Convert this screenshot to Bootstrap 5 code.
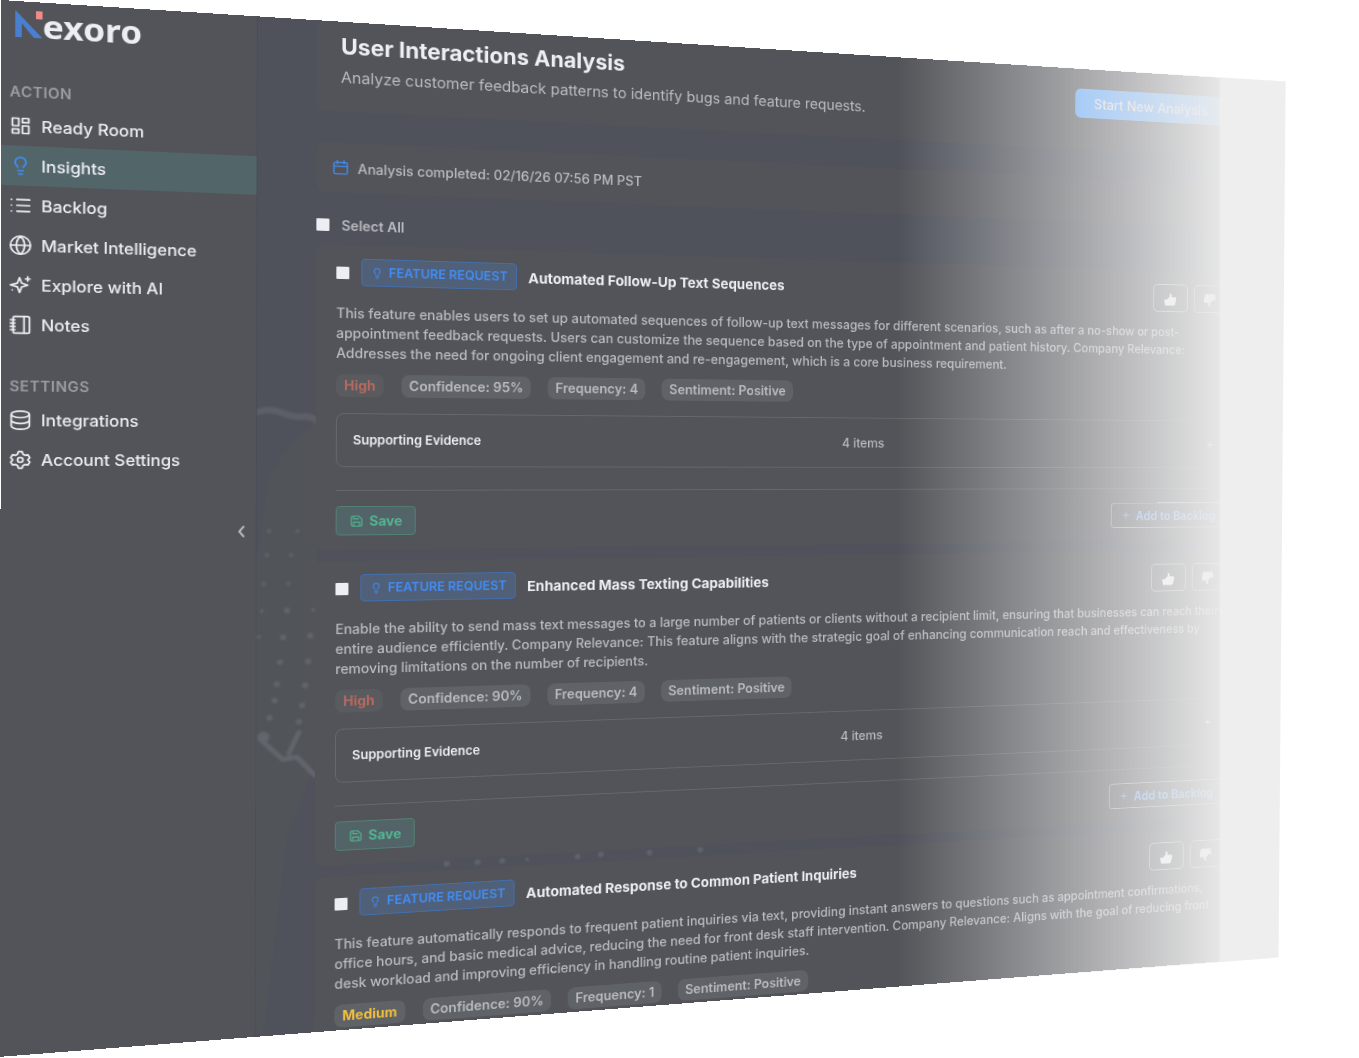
<!DOCTYPE html>
<html lang="en">
<head>
<meta charset="utf-8">
<meta name="viewport" content="width=device-width, initial-scale=1">
<title>Nexoro – Insights</title>
<link href="https://cdn.jsdelivr.net/npm/bootstrap@5.3.0/dist/css/bootstrap.min.css" rel="stylesheet">
<style>
:root{--panel:#535459;--canvas:#4f525b;--bright:#eceef3;--soft:#b9bbc0;--blue:#418df5;--green:#54b492}
body{background:#fff;font-family:Inter,"Liberation Sans",sans-serif;color:var(--soft);overflow:hidden}
.stage{height:100vh;overflow:hidden}
/* the whole app is shown as one tilted plane */
.plane{width:103.8vw;height:100.5vh;overflow:hidden;transform-origin:0 0;background:var(--canvas);
  transform:matrix3d(1.1,.07024,0,.00014789,-.00094,1,0,.0000054921,0,0,1,0,1,0,0,1)}
/* fade towards the right edge, in window space */
.fade-veil{inset:0;pointer-events:none;
  clip-path:polygon(0 0,94.6vw 7.7vh,94.08vw 90.5vh,0 100vh);
  background:linear-gradient(90deg,rgba(238,238,238,0) 66%,rgba(238,238,238,.95) 89.7%,#eee 89.8%)}
svg{fill:none;stroke:currentColor;stroke-width:2;stroke-linecap:round;stroke-linejoin:round;flex:none}
svg.solid{stroke:none}
.side{width:242px;background:var(--panel);border-right:1px solid #494d58}
.brand{height:77px;padding:6px 0 0 13px;font:700 33px/36px "Noto Sans",sans-serif;color:var(--bright);text-decoration:none}
.side-title{font-size:14px;line-height:28px;font-weight:600;color:#9b9da2;padding-left:8px;letter-spacing:.5px}
.side-link{height:40px;padding-left:8px;gap:9px;font-size:16px;font-weight:500;color:var(--bright);text-decoration:none}
.side-link.active{background:#526568}
.side-link.active svg{color:var(--blue)}
.fold-btn{background:none;border:0;padding:0;color:#c4c6ca;margin:44px 7px 0 0;line-height:1}
.work{padding:0 53px 0 58px;min-width:0}
.panel-box{background:var(--panel);border-radius:8px}
.head-box{padding:10px 24px 24px;margin-bottom:33px}
h1{font-size:23px;line-height:32px;font-weight:700;color:var(--bright);margin:0 0 4px}
.head-box p{font-size:16px;line-height:24px;margin:0}
.start-btn{width:192px;height:34px;border:0;border-radius:7px;background:#5aa5ff;color:#ddd;font-size:16px;font-weight:500}
.info-box{height:52px;padding:0 16px;gap:9px;font-size:14px;font-weight:500}
.all-row{height:55px;padding-top:24px;gap:12px;font-size:14px;line-height:21px;font-weight:600}
.tick{appearance:none;width:13px;height:13px;background:#eceef3;border-radius:1px;margin:0;flex:none}
.idea{padding:15px 20px;margin-bottom:12px}
.kind{width:160px;height:29px;border:1px solid #426fb0;border-radius:4px;background:#506079;color:var(--blue);font-size:13px;font-weight:600;gap:6px;margin-top:-2px}
h2{font-size:15px;line-height:24px;font-weight:700;color:var(--bright);margin:0}
.vote{width:44px;height:33px;border:1px solid #b4b5b8;border-radius:5px;background:none;color:#fff;padding:0}
.idea p{font-size:14px;line-height:21px;font-weight:500;margin:13px 0 12px}
.chips{gap:18px}
.chip{height:24px;line-height:24px;border-radius:8px;padding:0 8px;background:#5f6266;font-size:14px;font-weight:600}
.chip-high{background:#5a5b5f;color:#b3695f;font-weight:700}
.chip-mid{color:#f0bf3e;font-weight:700}
.proof{height:57px;margin-top:17px;padding:0 16px;border:1px solid #66686c;border-radius:8px;font-size:14px;font-weight:500}
.proof strong{font-size:13px;font-weight:600;color:var(--bright)}
.proof svg{color:#fff}
.foot{margin-top:24px;padding-top:16px;border-top:1px solid #66686c}
.save-btn{width:81px;height:31px;border:1px solid #528273;border-radius:4px;background:#526467;color:var(--green);font-size:14px;font-weight:700;gap:6px}
.add-btn{width:148px;height:30px;border:1px solid #a0a3aa;border-radius:4px;background:none;color:#72adff;font-size:14px;font-weight:600;gap:8px}
.mesh{left:0;top:0;color:#62656b;filter:blur(1px)}
.mesh .line{stroke:currentColor}
</style>
</head>
<body>
<svg class="d-none">
  <symbol id="bulb" viewBox="0 0 24 24"><path d="M9 18h6M10 22h4M15 14c.2-1 .7-1.700 1.500-2.500A5.500 5.500 0 0 0 18 8 6 6 0 0 0 6 8c0 1.300.5 2.500 1.500 3.500.8.8 1.300 1.500 1.500 2.500"/></symbol>
  <symbol id="up" viewBox="0 0 24 24"><path fill="currentColor" d="M1 12h6v10H3zM6 12l5-5V1.500c3 0 4.500 2 3.500 6h6a2.500 2.500 0 0 1 2.500 3l-2 9a3 3 0 0 1-3 2.500H6z"/></symbol>
  <symbol id="disk" viewBox="0 0 24 24"><path d="M15 3H5a2 2 0 0 0-2 2v14a2 2 0 0 0 2 2h14a2 2 0 0 0 2-2V8zM17 21v-7H7v7M7 3v5h8"/></symbol>
  <symbol id="plus" viewBox="0 0 24 24"><path d="M12 3v18M3 12h18"/></symbol>
</svg>
<div class="stage position-relative">
<div class="plane d-flex">
  <nav class="side d-flex flex-column flex-shrink-0" aria-label="Main">
    <a class="brand d-flex" href="#">
      <svg class="solid" width="25" height="32" viewBox="0 0 25 32"><path fill="#4a7fd0" d="M0 3l25 27h-8L6 16v14H0z"/><path fill="#f28b88" d="M19 3h6v8h-6z"/></svg>exoro</a>
    <div class="side-title">ACTION</div>
    <a class="side-link d-flex align-items-center" href="#"><svg width="20" height="20" viewBox="0 0 24 24"><path d="M3 3h7v9H3zM14 3h7v5h-7zM14 12h7v9h-7zM3 16h7v5H3z"/></svg>Ready Room</a>
    <a class="side-link active d-flex align-items-center" href="#"><svg width="20" height="20"><use href="#bulb"/></svg>Insights</a>
    <a class="side-link d-flex align-items-center" href="#"><svg width="20" height="20" viewBox="0 0 24 24"><path d="M8 5h14M8 12h14M8 19h14M2 5h.1M2 12h.1M2 19h.1"/></svg>Backlog</a>
    <a class="side-link d-flex align-items-center" href="#"><svg width="20" height="20" viewBox="0 0 24 24"><circle cx="12" cy="12" r="11"/><path d="M1 12h22M12 1c6 6 6 16 0 22M12 1c-6 6-6 16 0 22"/></svg>Market Intelligence</a>
    <a class="side-link d-flex align-items-center" href="#"><svg width="20" height="20" viewBox="0 0 24 24"><path d="M11 3l2.300 6.700L20 12l-6.700 2.300L11 21l-2.300-6.700L1 12l7.700-2.300zM20 2v5M17.500 4.500h5M3 18v.1"/></svg>Explore with AI</a>
    <a class="side-link d-flex align-items-center" href="#"><svg width="20" height="20" viewBox="0 0 24 24"><rect x="4" y="2" width="18" height="20" rx="2"/><path d="M16 2v20M1 6h5M1 10h5M1 14h5M1 18h5"/></svg>Notes</a>
    <div class="side-title mt-4 pt-1">SETTINGS</div>
    <a class="side-link d-flex align-items-center" href="#"><svg width="20" height="20" viewBox="0 0 24 24"><ellipse cx="12" cy="5" rx="10" ry="4"/><path d="M2 5v14c0 2.200 4.500 4 10 4s10-1.800 10-4V5M2 12c0 2.200 4.500 4 10 4s10-1.800 10-4"/></svg>Integrations</a>
    <a class="side-link d-flex align-items-center" href="#"><svg width="20" height="20" viewBox="0 0 24 24"><circle cx="12" cy="12" r="3"/><path d="M10 2h4l1 3 2.500 1.500 3-.7 2 3.600L20.300 12l2.200 2.600-2 3.600-3-.7L15 19l-1 3h-4l-1-3-2.500-1.500-3 .7-2-3.600L3.700 12 1.500 9.400l2-3.600 3 .7L9 5z"/></svg>Account Settings</a>
    <button class="fold-btn align-self-end" type="button" aria-label="Collapse sidebar"><svg width="14" height="20" viewBox="0 0 14 20"><path d="M9 5l-4 5 4 5"/></svg></button>
  </nav>

  <main class="work flex-grow-1 position-relative">
    <svg class="mesh solid position-absolute" width="600" height="1060" viewBox="0 0 600 1060">
      <path fill="#51555a" d="M12 480Q30 440 60 420V770L30 860 8 1060H0V560z"/>
      <path class="line" stroke-width="7" opacity=".7" d="M0 411q12-5 24 0t20 4 16 5"/>
      <path class="line" stroke-width="5" d="M4 752l10 10 12 12 14-2 18 20M32 768l10-22"/>
      <g fill="currentColor"><circle cx="7" cy="750" r="6"/><circle cx="13" cy="730" r="3"/><circle cx="18" cy="712" r="3"/><circle cx="20" cy="695" r="3"/><circle cx="23" cy="672" r="3"/><circle cx="26" cy="646" r="3"/><circle cx="30" cy="618" r="3"/><circle cx="31" cy="590" r="2"/><circle cx="34" cy="560" r="2"/><circle cx="42" cy="735" r="3"/><circle cx="45" cy="718" r="3"/><circle cx="48" cy="697" r="3"/><circle cx="51" cy="672" r="3"/><circle cx="53" cy="645" r="3"/><circle cx="56" cy="618" r="2"/><circle cx="2" cy="645" r="2"/><circle cx="5" cy="618" r="2"/><circle cx="7" cy="590" r="2"/><circle cx="10" cy="560" r="2"/><circle cx="12" cy="535" r="2"/><circle cx="40" cy="535" r="2"/>
      <circle cx="192" cy="893" r="3"/><circle cx="224" cy="893" r="3"/><circle cx="250" cy="893" r="3"/><circle cx="276" cy="893" r="2"/><circle cx="330" cy="893" r="3"/><circle cx="355" cy="892" r="3"/><circle cx="408" cy="893" r="3"/><circle cx="464" cy="893" r="3"/></g>
    </svg>
    <div class="position-relative">
    <header class="panel-box head-box d-flex align-items-center justify-content-between">
      <div><h1>User Interactions Analysis</h1><p>Analyze customer feedback patterns to identify bugs and feature requests.</p></div>
      <button class="start-btn" type="button">Start New Analysis</button>
    </header>
    <div class="panel-box info-box d-flex align-items-center">
      <svg width="16" height="16" viewBox="0 0 24 24" color="#418df5"><rect x="2" y="4" width="20" height="18" rx="2"/><path d="M2 10h20M7 1v5M17 1v5"/></svg>
      Analysis completed: 02/16/26 07:56 PM PST
    </div>
    <div class="all-row d-flex align-items-start">
      <input class="tick mt-1" type="checkbox" id="all"><label for="all">Select All</label>
    </div>

    <article class="panel-box idea">
      <div class="d-flex align-items-center gap-2">
        <div class="d-flex align-items-center gap-2 me-auto mb-1"><input class="tick me-1" type="checkbox" id="i1">
        <span class="kind d-flex align-items-center justify-content-center me-1"><svg width="12" height="14"><use href="#bulb"/></svg>FEATURE REQUEST</span>
        <h2><label for="i1">Automated Follow-Up Text Sequences</label></h2></div>
        <button class="vote" type="button" aria-label="Helpful"><svg class="solid" width="17" height="17"><use href="#up"/></svg></button>
        <button class="vote" type="button" aria-label="Not helpful"><svg class="solid" width="17" height="17"><use href="#up" transform="rotate(180 8 8)"/></svg></button>
      </div>
      <p>This feature enables users to set up automated sequences of follow-up text messages for different scenarios, such as after a no-show or post-appointment feedback requests. Users can customize the sequence based on the type of appointment and patient history. Company Relevance: Addresses the need for ongoing client engagement and re-engagement, which is a core business requirement.</p>
      <div class="chips d-flex"><span class="chip chip-high">High</span><span class="chip">Confidence: 95%</span><span class="chip">Frequency: 4</span><span class="chip">Sentiment: Positive</span></div>
      <div class="proof d-flex align-items-center justify-content-between"><strong>Supporting Evidence</strong><span>4 items</span><svg width="10" height="10"><use href="#plus"/></svg></div>
      <div class="foot d-flex align-items-start justify-content-between">
        <button class="save-btn d-flex align-items-center justify-content-center" type="button"><svg width="14" height="14"><use href="#disk"/></svg>Save</button>
        <button class="add-btn d-flex align-items-center justify-content-center" type="button"><svg width="10" height="10"><use href="#plus"/></svg>Add to Backlog</button>
      </div>
    </article>

    <article class="panel-box idea">
      <div class="d-flex align-items-center gap-2">
        <div class="d-flex align-items-center gap-2 me-auto mb-1"><input class="tick me-1" type="checkbox" id="i2">
        <span class="kind d-flex align-items-center justify-content-center me-1"><svg width="12" height="14"><use href="#bulb"/></svg>FEATURE REQUEST</span>
        <h2><label for="i2">Enhanced Mass Texting Capabilities</label></h2></div>
        <button class="vote" type="button" aria-label="Helpful"><svg class="solid" width="17" height="17"><use href="#up"/></svg></button>
        <button class="vote" type="button" aria-label="Not helpful"><svg class="solid" width="17" height="17"><use href="#up" transform="rotate(180 8 8)"/></svg></button>
      </div>
      <p>Enable the ability to send mass text messages to a large number of patients or clients without a recipient limit, ensuring that businesses can reach their entire audience efficiently. Company Relevance: This feature aligns with the strategic goal of enhancing communication reach and effectiveness by removing limitations on the number of recipients.</p>
      <div class="chips d-flex"><span class="chip chip-high">High</span><span class="chip">Confidence: 90%</span><span class="chip">Frequency: 4</span><span class="chip">Sentiment: Positive</span></div>
      <div class="proof d-flex align-items-center justify-content-between"><strong>Supporting Evidence</strong><span>4 items</span><svg width="10" height="10"><use href="#plus"/></svg></div>
      <div class="foot d-flex align-items-start justify-content-between">
        <button class="save-btn d-flex align-items-center justify-content-center" type="button"><svg width="14" height="14"><use href="#disk"/></svg>Save</button>
        <button class="add-btn d-flex align-items-center justify-content-center" type="button"><svg width="10" height="10"><use href="#plus"/></svg>Add to Backlog</button>
      </div>
    </article>

    <article class="panel-box idea">
      <div class="d-flex align-items-center gap-2">
        <div class="d-flex align-items-center gap-2 me-auto mb-1"><input class="tick me-1" type="checkbox" id="i3">
        <span class="kind d-flex align-items-center justify-content-center me-1"><svg width="12" height="14"><use href="#bulb"/></svg>FEATURE REQUEST</span>
        <h2><label for="i3">Automated Response to Common Patient Inquiries</label></h2></div>
        <button class="vote" type="button" aria-label="Helpful"><svg class="solid" width="17" height="17"><use href="#up"/></svg></button>
        <button class="vote" type="button" aria-label="Not helpful"><svg class="solid" width="17" height="17"><use href="#up" transform="rotate(180 8 8)"/></svg></button>
      </div>
      <p>This feature automatically responds to frequent patient inquiries via text, providing instant answers to questions such as appointment confirmations, office hours, and basic medical advice, reducing the need for front desk staff intervention. Company Relevance: Aligns with the goal of reducing front desk workload and improving efficiency in handling routine patient inquiries.</p>
      <div class="chips d-flex"><span class="chip chip-mid">Medium</span><span class="chip">Confidence: 90%</span><span class="chip">Frequency: 1</span><span class="chip">Sentiment: Positive</span></div>
    </article>
    </div>
  </main>
</div>
<div class="fade-veil position-absolute"></div>
</div>
<script src="https://cdn.jsdelivr.net/npm/bootstrap@5.3.0/dist/js/bootstrap.bundle.min.js"></script>
</body>
</html>
